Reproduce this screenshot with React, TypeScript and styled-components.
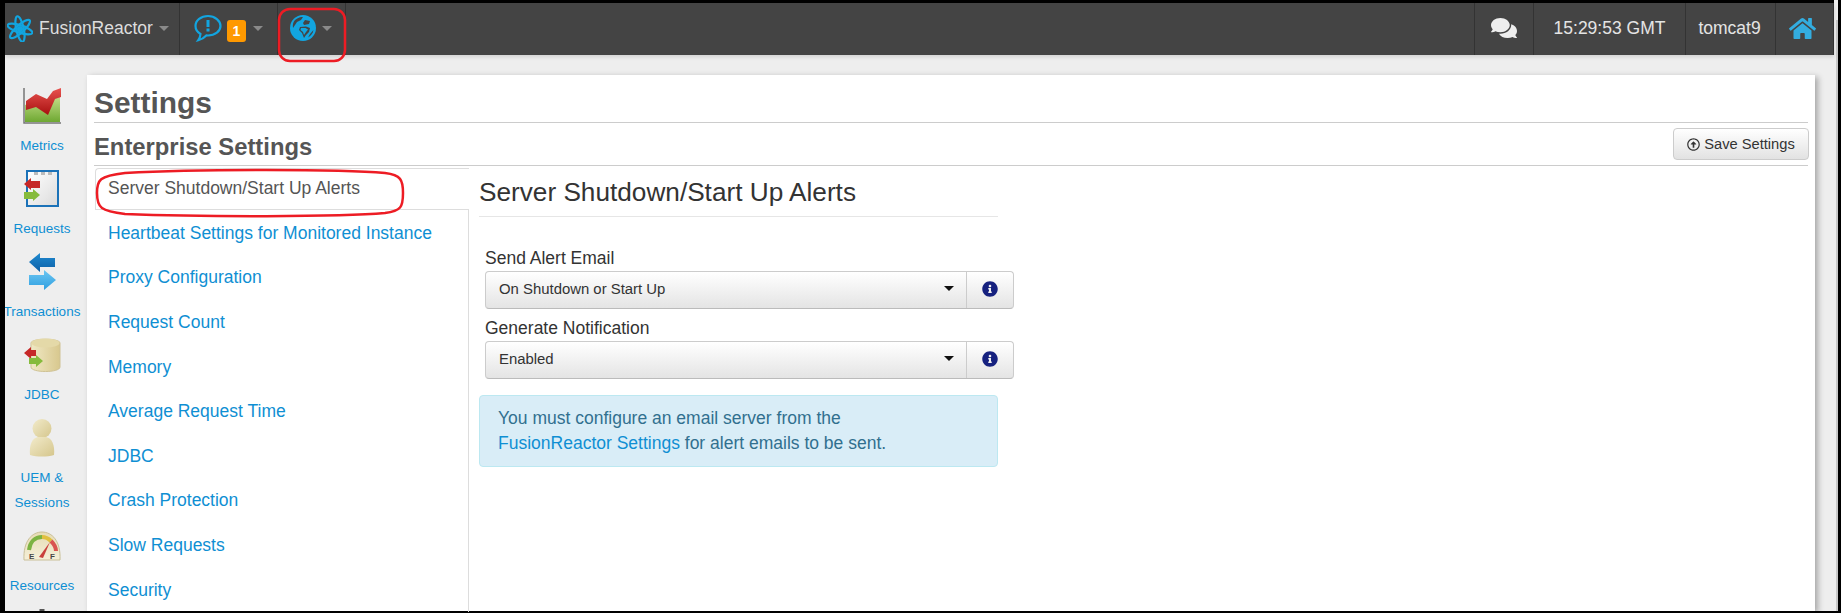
import { createGlobalStyle, styled } from "styled-components";
import { FaComments, FaHome, FaInfoCircle, FaRegArrowAltCircleUp } from "react-icons/fa";

const Global = createGlobalStyle`
  html, body { margin: 0; padding: 0; }
  body {
    font-family: "Liberation Sans", Arial, sans-serif;
    font-size: 17.5px;
    color: #333;
    background: #000;
  }
  * { box-sizing: border-box; }
`;

const Frame = styled.div`
  position: relative;
  width: 1841px;
  height: 613px;
  display: flex;
  overflow: hidden;
  background: #000;
  padding: 0 3px 2px 5px;
`;
const Page = styled.div`
  flex: 1;
  min-width: 0;
  margin-top: 3px;
  display: flex;
  flex-direction: column;
  background: #eee;
`;
const Track = styled.div`
  width: 4px;
  background:
    linear-gradient(to right, transparent 50%, #c8c8c8 50%) 0 20px no-repeat,
    #eee;
`;
const Nav = styled.div`
  height: 52px;
  flex: none;
  display: flex;
  background: #444;
  box-shadow: 0 2px 4px rgba(0, 0, 0, 0.12);
  position: relative;
`;
const NavItem = styled.div<{ $w: number; $pr?: number }>`
  width: ${(p) => p.$w}px;
  display: flex;
  align-items: center;
  justify-content: center;
  gap: 6px;
  color: #e4e4e4;
  font-size: 17.5px;
  padding-bottom: 2px;
  padding-right: ${(p) => p.$pr ?? 0}px;
  border-right: 1px solid #333;
`;
const NavRight = styled.div`
  margin-left: auto;
  display: flex;
  border-left: 1px solid #333;
`;
const Brand = styled.span`
  font-size: 17.5px;
  color: #ddd;
`;
const Caret = styled.span`
  width: 0;
  height: 0;
  border-left: 5px solid transparent;
  border-right: 5px solid transparent;
  border-top: 5px solid #8a8a8a;
`;
const Badge = styled.span`
  width: 19px;
  height: 22px;
  margin-top: 6px;
  margin-left: -1px;
  margin-right: 1px;
  border-radius: 3px;
  background: #f90;
  color: #fff;
  font-weight: bold;
  font-size: 14px;
  display: flex;
  align-items: center;
  justify-content: center;
`;
const Body = styled.div`
  flex: 1;
  min-height: 0;
  display: flex;
  padding-right: 19px;
`;
const Sidebar = styled.div`
  width: 82px;
  flex: none;
  padding: 31px 8px 0 0;
  display: flex;
  flex-direction: column;
  align-items: center;
  overflow: hidden;
`;
const SideItem = styled.a`
  flex: none;
  width: 100%;
  padding-bottom: 11px;
  display: flex;
  flex-direction: column;
  align-items: center;
  color: #0f8fd3;
  font-size: 13.5px;
  line-height: 25px;
  text-align: center;
  white-space: nowrap;
`;
const SideIcon = styled.div`
  height: 40px;
  margin-bottom: 7px;
  display: flex;
  align-items: center;
  justify-content: center;
`;
const Card = styled.div`
  flex: 1;
  min-width: 0;
  margin-top: 20px;
  padding: 0 7px;
  background: #fff;
  box-shadow: 3px 2px 6px rgba(0, 0, 0, 0.3);
  display: flex;
  flex-direction: column;
`;
const Title = styled.h1`
  margin: 0;
  height: 48px;
  padding: 11px 0 0 0;
  font-size: 29.9px;
  line-height: 34px;
  font-weight: bold;
  color: #555;
  border-bottom: 1px solid #ccc;
`;
const SectionRow = styled.div`
  height: 43px;
  display: flex;
  align-items: center;
  justify-content: space-between;
  border-bottom: 1px solid #ccc;
`;
const Section = styled.h2`
  margin: 0;
  padding-top: 5px;
  font-size: 23.8px;
  font-weight: bold;
  color: #555;
`;
const SaveButton = styled.button`
  width: 136px;
  height: 32px;
  margin-right: -1px;
  display: flex;
  align-items: center;
  justify-content: center;
  gap: 4px;
  padding: 0;
  font: 14.7px "Liberation Sans", Arial, sans-serif;
  color: #333;
  border: 1px solid #ccc;
  border-radius: 4px;
  background: linear-gradient(#fff, #e2e2e2);
`;
const Columns = styled.div`
  flex: 1;
  min-height: 0;
  margin-top: 2px;
  display: flex;
`;
const Tabs = styled.div`
  width: 375px;
  flex: none;
  padding-left: 1px;
  display: flex;
  flex-direction: column;
`;
const ActiveTab = styled.div`
  height: 42px;
  flex: none;
  padding: 0 0 1px 12px;
  display: flex;
  align-items: center;
  color: #555;
  border: 1px solid #ddd;
  border-right: none;
  border-radius: 4px 0 0 0;
`;
const TabLinks = styled.div`
  flex: 1;
  border-right: 1px solid #ddd;
  padding: 1px 0 0 13px;
`;
const TabLink = styled.a`
  height: 44.6px;
  display: flex;
  align-items: center;
  color: #0f8fd3;
`;
const Panel = styled.div`
  width: 519px;
  margin-left: 10px;
`;
const PanelTitle = styled.h3`
  margin: 0 0 29px;
  height: 49px;
  padding: 5px 0 0 0;
  font-size: 26.2px;
  font-weight: normal;
  line-height: 38px;
  color: #333;
  border-bottom: 1px solid #e6e6e6;
`;
const Group = styled.div`
  width: 529px;
  margin: 0 0 7px 6px;
`;
const Label = styled.div`
  height: 25px;
  line-height: 25px;
  color: #333;
`;
const SelectRow = styled.div`
  height: 38px;
  display: flex;
  border: 1px solid #ccc;
  border-bottom-color: #bbb;
  border-radius: 4px;
  background: linear-gradient(#fff, #e4e4e4);
  font-size: 14.9px;
`;
const SelectValue = styled.div`
  flex: 1;
  padding: 0 0 3px 13px;
  display: flex;
  align-items: center;
  justify-content: space-between;
  color: #333;
`;
const SelectCaret = styled.span`
  width: 0;
  height: 0;
  margin-right: 12px;
  border-left: 5px solid transparent;
  border-right: 5px solid transparent;
  border-top: 5px solid #111;
`;
const InfoCell = styled.div`
  width: 47px;
  flex: none;
  padding-bottom: 3px;
  display: flex;
  align-items: center;
  justify-content: center;
  border-left: 1px solid #ccc;
  color: #16217f;
`;
const Alert = styled.div`
  height: 72px;
  margin-top: 16px;
  padding: 10px 18px;
  line-height: 25px;
  color: #31708f;
  background: #d9edf7;
  border: 1px solid #bce8f1;
  border-radius: 4px;
`;
const AlertLink = styled.a`
  color: #0f8fd3;
`;
const Marks = styled.svg`
  position: absolute;
  left: 0;
  top: 0;
  pointer-events: none;
`;

const tabs = [
  "Heartbeat Settings for Monitored Instance",
  "Proxy Configuration",
  "Request Count",
  "Memory",
  "Average Request Time",
  "JDBC",
  "Crash Protection",
  "Slow Requests",
  "Security",
];

const Atom = () => (
  <svg width="26" height="27" viewBox="0 0 26 27" fill="none" stroke="#12a5e0" strokeWidth="2.2">
    <ellipse cx="13" cy="14" rx="13" ry="3.800" transform="rotate(18 13 14)" />
    <ellipse cx="13" cy="14" rx="13" ry="3.800" transform="rotate(-42 13 14)" />
    <ellipse cx="13" cy="14" rx="13" ry="3.800" transform="rotate(78 13 14)" />
    <circle cx="13" cy="14" r="2" fill="#12a5e0" />
  </svg>
);

const AlertBubble = () => (
  <svg width="28" height="28" viewBox="0 0 28 28">
    <path
      d="M14 2C7 2 1.5 6.2 1.5 12c0 3.400 2 6.200 5 8-.2 2.400-1 4.500-2.200 6.200 3.200-.8 6-2.600 8-4.800.6.100 1.200.100 1.700.100 7 0 12.500-4.300 12.500-9.500S21 2 14 2z"
      fill="none"
      stroke="#12a5e0"
      strokeWidth="2.200"
    />
    <rect x="12.500" y="6" width="3" height="7" fill="#12a5e0" />
    <rect x="12.500" y="14.500" width="3" height="3" fill="#12a5e0" />
  </svg>
);

const Globe = () => (
  <svg width="26" height="26" viewBox="0 0 26 26">
    <circle cx="13" cy="13" r="13" fill="#12a5e0" />
    <path d="M5 5 C8 2.500 11 2 13 2 L11 5 L7 7 L5 10 L3 13 C2.500 10 3 7 5 5 Z" fill="#444" />
    <path d="M15 5 L20 6 L19 9 L14 10 L13 8 Z" fill="#444" />
    <path d="M10 12 L16 11.500 L20 13 L19 17 L16 20 L14 23 L12 18 L9 15 Z" fill="#444" />
    <path d="M23.500 15 C23 18 21 21 18 22.500 L20 19 Z" fill="#444" />
    <path d="M11 13 L15.500 13 L18 14.500 L16 17 L14 20 L13 17 L10.500 15 Z" fill="#12a5e0" />
  </svg>
);

const MetricsIcon = () => (
  <svg width="38" height="36" viewBox="0 0 38 36">
    <defs>
      <linearGradient id="mg" x1="0" y1="0" x2="0" y2="1">
        <stop offset="0" stopColor="#c6e08a" />
        <stop offset="1" stopColor="#6ea832" />
      </linearGradient>
      <linearGradient id="mr" x1="0" y1="0" x2="0" y2="1">
        <stop offset="0" stopColor="#e8534f" />
        <stop offset="1" stopColor="#a81010" />
      </linearGradient>
    </defs>
    <path d="M2 17 L13 12 L25 20 L32 9 L37 8 V34 H2 Z" fill="url(#mg)" />
    <path d="M3 13 L13 6 L24 11 L30 3 L38 0 V9 L32 11 L25 27 L13 19 L3 22 Z" fill="url(#mr)" />
    <path d="M1 0 V35 H38" fill="none" stroke="#777" strokeWidth="1.500" />
  </svg>
);

const RequestsIcon = () => (
  <svg width="36" height="38" viewBox="0 0 36 38">
    <defs>
      <linearGradient id="rp" x1="0" y1="0" x2="1" y2="1">
        <stop offset="0" stopColor="#fff" />
        <stop offset="1" stopColor="#dcdcdc" />
      </linearGradient>
    </defs>
    <rect x="2" y="0" width="33" height="37" fill="#1b72b8" />
    <rect x="4" y="2" width="29" height="33" fill="url(#rp)" />
    <rect x="10" y="2" width="4" height="3" fill="#bbb" />
    <rect x="17" y="2" width="4" height="3" fill="#bbb" />
    <rect x="24" y="2" width="4" height="3" fill="#bbb" />
    <path d="M0 14 L7 8 V11 H16 V18 H7 V20 Z" fill="#c62828" />
    <path d="M16 25 L9 19 V22 H0 V29 H9 V31 Z" fill="#86bb3c" />
  </svg>
);

const TransactionsIcon = () => (
  <svg width="27" height="38" viewBox="0 0 27 38">
    <defs>
      <linearGradient id="tb" x1="0" y1="0" x2="0" y2="1">
        <stop offset="0" stopColor="#1f8ad0" />
        <stop offset="1" stopColor="#0d5fa6" />
      </linearGradient>
      <linearGradient id="tl" x1="0" y1="0" x2="0" y2="1">
        <stop offset="0" stopColor="#6cc6f2" />
        <stop offset="1" stopColor="#2f9fe0" />
      </linearGradient>
    </defs>
    <path d="M0 9 L11 0 V5 H26 V14 H11 V19 Z" fill="url(#tb)" />
    <path d="M27 27 L15 37 V32 H0 V22 H15 V17 Z" fill="url(#tl)" />
  </svg>
);

const JdbcIcon = () => (
  <svg width="38" height="35" viewBox="0 0 38 35">
    <defs>
      <linearGradient id="jb" x1="0" y1="0" x2="1" y2="0">
        <stop offset="0" stopColor="#f0e8c4" />
        <stop offset="1" stopColor="#d8c88e" />
      </linearGradient>
    </defs>
    <path d="M8 5 C8 0 37 0 37 5 V29 C37 35 8 35 8 29 Z" fill="url(#jb)" stroke="#cfc294" />
    <ellipse cx="22.500" cy="5" rx="14" ry="4.500" fill="#e4d9a8" />
    <path d="M1 15 L8 9 V12 H13 V18 H8 V21 Z" fill="#c62828" />
    <path d="M20 23 L13 17 V20 H6 V26 H13 V29 Z" fill="#86bb3c" />
  </svg>
);

const UserIcon = () => (
  <svg width="26" height="38" viewBox="0 0 26 38">
    <defs>
      <linearGradient id="ub" x1="0" y1="0" x2="1" y2="1">
        <stop offset="0" stopColor="#f2ebcb" />
        <stop offset="1" stopColor="#d5c68c" />
      </linearGradient>
    </defs>
    <ellipse cx="13" cy="9.500" rx="9.500" ry="9.500" fill="url(#ub)" />
    <path d="M1 36 C0 26 3 19 9 18 H17 C23 19 26 26 25 36 C18 38 8 38 1 36 Z" fill="url(#ub)" />
  </svg>
);

const GaugeIcon = () => (
  <svg width="38" height="30" viewBox="0 0 38 30">
    <defs>
      <linearGradient id="gb" x1="0" y1="0" x2="0" y2="1">
        <stop offset="0" stopColor="#e6dcb4" />
        <stop offset="1" stopColor="#f5efd8" />
      </linearGradient>
    </defs>
    <path d="M1 29 C0 10 9 1 19 1 C29 1 38 10 37 29 Z" fill="url(#gb)" stroke="#c9bf98" />
    <path d="M6 19 C7 11 12 6 19 6" fill="none" stroke="#7cb342" strokeWidth="4" />
    <path d="M19 6 C23 6 26 8 28 10" fill="none" stroke="#e0c040" strokeWidth="4" />
    <path d="M28 10 C31 13 33 16 33 20" fill="none" stroke="#d9534f" strokeWidth="4" />
    <path d="M16 26 L27 11 L20 27 Z" fill="#c9403c" />
    <text x="6" y="28" fontSize="8" fontWeight="bold" fill="#444" fontFamily="Liberation Sans">E</text>
    <text x="27" y="28" fontSize="8" fontWeight="bold" fill="#444" fontFamily="Liberation Sans">F</text>
  </svg>
);

const NextIcon = () => (
  <svg width="10" height="4" viewBox="0 0 10 4">
    <rect width="10" height="4" fill="#555" />
  </svg>
);

export default function App() {
  return (
    <Frame>
      <Global />
      <Page>
        <Nav>
          <NavItem $w={175} $pr={8}>
            <Atom />
            <Brand>FusionReactor</Brand>
            <Caret />
          </NavItem>
          <NavItem $w={98}>
            <AlertBubble />
            <Badge>1</Badge>
            <Caret />
          </NavItem>
          <NavItem $w={68} $pr={2}>
            <Globe />
            <Caret />
          </NavItem>
          <NavRight>
            <NavItem $w={59}>
              <FaComments size={26} color="#eee" />
            </NavItem>
            <NavItem $w={152}>15:29:53 GMT</NavItem>
            <NavItem $w={90} $pr={2}>tomcat9</NavItem>
            <NavItem $w={58} $pr={4}>
              <FaHome size={27} color="#33ade0" />
            </NavItem>
          </NavRight>
        </Nav>
        <Body>
          <Sidebar>
            <SideItem>
              <SideIcon><MetricsIcon /></SideIcon>
              Metrics
            </SideItem>
            <SideItem>
              <SideIcon><RequestsIcon /></SideIcon>
              Requests
            </SideItem>
            <SideItem>
              <SideIcon><TransactionsIcon /></SideIcon>
              Transactions
            </SideItem>
            <SideItem>
              <SideIcon><JdbcIcon /></SideIcon>
              JDBC
            </SideItem>
            <SideItem>
              <SideIcon><UserIcon /></SideIcon>
              UEM &amp;
              <br />
              Sessions
            </SideItem>
            <SideItem>
              <SideIcon><GaugeIcon /></SideIcon>
              Resources
            </SideItem>
            <NextIcon />
          </Sidebar>
          <Card>
            <Title>Settings</Title>
            <SectionRow>
              <Section>Enterprise Settings</Section>
              <SaveButton>
                <FaRegArrowAltCircleUp size={13} />
                Save Settings
              </SaveButton>
            </SectionRow>
            <Columns>
              <Tabs>
                <ActiveTab>Server Shutdown/Start Up Alerts</ActiveTab>
                <TabLinks>
                  {tabs.map((t) => (
                    <TabLink key={t}>{t}</TabLink>
                  ))}
                </TabLinks>
              </Tabs>
              <Panel>
                <PanelTitle>Server Shutdown/Start Up Alerts</PanelTitle>
                <Group>
                  <Label>Send Alert Email</Label>
                  <SelectRow>
                    <SelectValue>
                      On Shutdown or Start Up
                      <SelectCaret />
                    </SelectValue>
                    <InfoCell><FaInfoCircle size={16} /></InfoCell>
                  </SelectRow>
                </Group>
                <Group>
                  <Label>Generate Notification</Label>
                  <SelectRow>
                    <SelectValue>
                      Enabled
                      <SelectCaret />
                    </SelectValue>
                    <InfoCell><FaInfoCircle size={16} /></InfoCell>
                  </SelectRow>
                </Group>
                <Alert>
                  You must configure an email server from the
                  <br />
                  <AlertLink>FusionReactor Settings</AlertLink> for alert emails to be sent.
                </Alert>
              </Panel>
            </Columns>
          </Card>
        </Body>
      </Page>
      <Track />
      <Marks width="1841" height="613" fill="none" stroke="#ed1c24" strokeWidth="2.5">
        <rect x="279" y="9" width="66" height="52" rx="11" />
        <path d="M97 193 C97 180 99 176 125 173 C200 169 340 169 385 173 C401 175 403 180 403 193 C403 207 401 211 385 213 C340 217 200 217 125 214 C101 211 97 208 97 193 Z" />
      </Marks>
    </Frame>
  );
}
